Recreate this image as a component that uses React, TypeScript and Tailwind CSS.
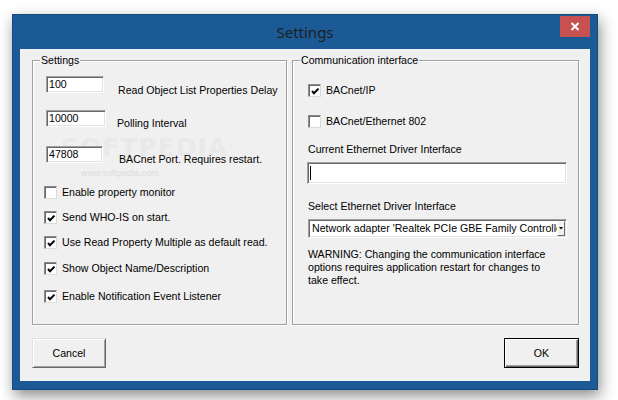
import React from 'react'

const ui = "font-['Liberation_Sans',Arial,sans-serif] text-[10.6px] leading-[13px] text-black"

function Check({ checked }: { checked?: boolean }) {
  return (
    <div className="w-[13px] h-[13px] shrink-0 bg-white border border-t-[#8a8a8a] border-l-[#8a8a8a] border-r-[#dadada] border-b-[#dadada] shadow-[inset_1px_1px_0_#6a6a6a] flex items-center justify-center">
      {checked && (
        <svg width="9" height="9" viewBox="0 0 9 9" className="ml-[1px] mt-[1px]">
          <path d="M1 4 L3 6.3 L7.5 1.6" fill="none" stroke="#000" strokeWidth="2" />
        </svg>
      )}
    </div>
  )
}

function CheckRow({ label, checked, mt }: { label: string; checked?: boolean; mt: string }) {
  return (
    <div className={`flex items-center ${mt}`}>
      <Check checked={checked} />
      <span className="ml-[5px]">{label}</span>
    </div>
  )
}

function Field({ value, w }: { value: string; w: string }) {
  return (
    <div
      className={`${w} h-[17px] shrink-0 bg-white border border-t-[#a0a0a0] border-l-[#a0a0a0] border-r-white border-b-white shadow-[inset_1px_1px_0_#696969,inset_-1px_-1px_0_#e3e3e3] pl-[2px] flex items-center`}
    >
      {value}
    </div>
  )
}

function Group({ title, children, w }: { title: string; children: React.ReactNode; w: string }) {
  return (
    <div className={`relative ${w} h-[265px] border border-[#a0a0a0] shadow-[1px_1px_0_#fff,inset_1px_1px_0_#fff]`}>
      <span className="absolute left-[7px] -top-[7px] px-[1px] bg-[#f0f0f0]">{title}</span>
      {children}
    </div>
  )
}

export default function App() {
  return (
    <div className="w-[618px] h-[400px] bg-white pt-[14px] pl-[12px] overflow-hidden">
      <div className="w-[586px] h-[376px] bg-[#1c5a96] border border-[#16497c] shadow-[2px_6px_14px_rgba(0,0,0,0.45)] flex flex-col">
        {/* Title bar */}
        <div className="h-[34px] flex items-start">
          <div className="flex-1" />
          <div className="pt-[7px] text-[15px] leading-[20px] text-[#1e1e1e] font-['Noto_Sans',sans-serif]">Settings</div>
          <div className="flex-1 flex justify-end">
            <div className="mt-[1px] mr-[7px] w-[30px] h-[21px] bg-[#c75050] flex items-center justify-center">
              <svg width="10" height="9" viewBox="0 0 10 9">
                <path d="M1.5 1 L8.5 8 M8.5 1 L1.5 8" stroke="#fff" strokeWidth="2" />
              </svg>
            </div>
          </div>
        </div>

        {/* Client area */}
        <div className={`mx-[7px] h-[332px] bg-[#f0f0f0] pt-[11px] pl-[12px] pr-[11px] ${ui}`}>
          <div className="flex gap-[5px]">
            <Group title="Settings" w="w-[255px]">
              {/* watermark */}
              <div className="absolute left-[28px] top-[75px] text-[25px] leading-[24px] font-bold tracking-[1px] text-[#e9e9e9] font-['DejaVu_Sans',sans-serif] select-none">
                SOFTPEDIA<span className="text-[7px] align-top">™</span>
              </div>
              <div className="absolute left-[48px] top-[106px] text-[9px] text-[#dcdcdc]">www.softpedia.com</div>
              <div className="relative pl-[11px] pt-[15px] flex flex-col">
                <div className="flex items-start ml-[2px]">
                  <Field value="100" w="w-[58px]" />
                  <span className="ml-[14px] mt-[8px]">Read Object List Properties Delay</span>
                </div>
                <div className="flex items-start ml-[2px] mt-[13px]">
                  <Field value="10000" w="w-[60px]" />
                  <span className="ml-[11px] mt-[7px]">Polling Interval</span>
                </div>
                <div className="flex items-start ml-[2px] mt-[16px]">
                  <Field value="47808" w="w-[57px]" />
                  <span className="ml-[16px] mt-[7px]">BACnet Port. Requires restart.</span>
                </div>
                <CheckRow label="Enable property monitor" mt="mt-[20px]" />
                <CheckRow label="Send WHO-IS on start." checked mt="mt-[12px]" />
                <CheckRow label="Use Read Property Multiple as default read." checked mt="mt-[12px]" />
                <CheckRow label="Show Object Name/Description" checked mt="mt-[13px]" />
                <CheckRow label="Enable Notification Event Listener" checked mt="mt-[15px]" />
              </div>
            </Group>

            <Group title="Communication interface" w="w-[287px]">
              <div className="pl-[15px] pt-[23px] flex flex-col items-start">
                <CheckRow label="BACnet/IP" checked mt="mt-0" />
                <CheckRow label="BACnet/Ethernet 802" mt="mt-[18px]" />
                <span className="mt-[15px]">Current Ethernet Driver Interface</span>
                <div className="mt-[6px] -ml-[1px] w-[260px] h-[22px] bg-white border border-t-[#a0a0a0] border-l-[#a0a0a0] border-r-white border-b-white shadow-[inset_1px_1px_0_#696969,inset_-1px_-1px_0_#e3e3e3] pl-[2px] flex items-center">
                  <div className="w-[1px] h-[14px] bg-black" />
                </div>
                <span className="mt-[16px]">Select Ethernet Driver Interface</span>
                <div className="mt-[6px] w-[259px] h-[19px] bg-white border border-t-[#a0a0a0] border-l-[#a0a0a0] border-r-white border-b-white shadow-[inset_1px_1px_0_#696969,inset_-1px_-1px_0_#e3e3e3] flex items-stretch p-[1px]">
                  <div className="flex-1 overflow-hidden whitespace-nowrap pl-[2px] flex items-center">
                    Network adapter 'Realtek PCIe GBE Family Controller' on local host
                  </div>
                  <div className="w-[8px] shrink-0 bg-[#f0f0f0] border border-t-white border-l-white border-r-[#696969] border-b-[#696969] flex items-center justify-center">
                    <svg width="4" height="3" viewBox="0 0 4 3">
                      <path d="M0 0 H4 L2 2.5 Z" fill="#000" />
                    </svg>
                  </div>
                </div>
                <p className="mt-[10px]">
                  WARNING: Changing the communication interface
                  <br />
                  options requires application restart for changes to
                  <br />
                  take effect.
                </p>
              </div>
            </Group>
          </div>

          {/* Buttons */}
          <div className="mt-[13px] flex justify-between">
            <button className="w-[74px] h-[30px] bg-[#f0f0f0] border border-t-[#e3e3e3] border-l-[#e3e3e3] border-r-[#696969] border-b-[#696969] shadow-[inset_1px_1px_0_#fff,inset_-1px_-1px_0_#a0a0a0]">
              Cancel
            </button>
            <button className="w-[75px] h-[30px] bg-[#f0f0f0] border border-black shadow-[inset_1px_1px_0_#fff,inset_-1px_-1px_0_#696969,inset_-2px_-2px_0_#a0a0a0]">
              OK
            </button>
          </div>
        </div>
      </div>
    </div>
  )
}
